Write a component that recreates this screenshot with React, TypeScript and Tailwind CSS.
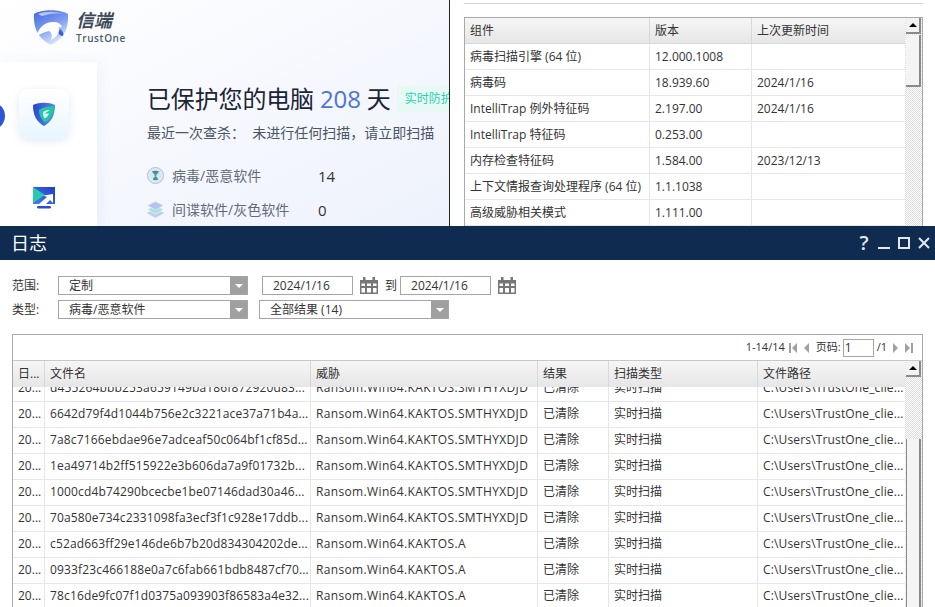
import React from "react";

const font = { fontFamily: '"Open Sans","Noto Sans CJK SC",sans-serif' };

const components = [
  ["病毒扫描引擎 (64 位)", "12.000.1008", ""],
  ["病毒码", "18.939.60", "2024/1/16"],
  ["IntelliTrap 例外特征码", "2.197.00", "2024/1/16"],
  ["IntelliTrap 特征码", "0.253.00", ""],
  ["内存检查特征码", "1.584.00", "2023/12/13"],
  ["上下文情报查询处理程序 (64 位)", "1.1.1038", ""],
  ["高级威胁相关模式", "1.111.00", ""],
];

const SM = "Ransom.Win64.KAKTOS.SMTHYXDJD";
const A = "Ransom.Win64.KAKTOS.A";
const logs = [
  ["d455264bbb253a659149ba186f872920d83...", SM],
  ["6642d79f4d1044b756e2c3221ace37a71b4a...", SM],
  ["7a8c7166ebdae96e7adceaf50c064bf1cf85d...", SM],
  ["1ea49714b2ff515922e3b606da7a9f01732b...", SM],
  ["1000cd4b74290bcecbe1be07146dad30a46...", SM],
  ["70a580e734c2331098fa3ecf3f1c928e17ddb...", SM],
  ["c52ad663ff29e146de6b7b20d834304202de...", A],
  ["0933f23c466188e0a7c6fab661bdb8487cf70...", A],
  ["78c16de9fc07f1d0375a093903f86583a4e32...", A],
];

function Logo() {
  return (
    <svg width="36" height="36" viewBox="0 0 36 36">
      <defs>
        <linearGradient id="lg1" x1="0" y1="0" x2="0.5" y2="1">
          <stop offset="0" stopColor="#3f66de" />
          <stop offset="0.55" stopColor="#7f9cf0" />
          <stop offset="1" stopColor="#dbe4fb" />
        </linearGradient>
        <linearGradient id="lg2" x1="0" y1="0" x2="1" y2="0">
          <stop offset="0" stopColor="#c4d2f8" />
          <stop offset="1" stopColor="#8fa8f0" />
        </linearGradient>
      </defs>
      <path d="M1 4C9 -1 27 -1 35 4C36 19 30 29 18 35C6 29 0 19 1 4Z" fill="url(#lg1)" />
      <path d="M5 4C13 1 23 1 31 4C27 3 18 3 9 6Z" fill="url(#lg2)" />
      <path d="M4 26C5 17 13 11 22 12C25 12.5 28 14 29 17L25.5 17.5C27 22 24 27 18 30C19.5 26 19 23 16 21C11 22 7 24 4 26Z" fill="#fff" />
      <path d="M27 19C30 21 31 24 30 26C28 26 26 25 25.5 23Z" fill="#3b5fd8" />
    </svg>
  );
}

function ShieldIcon() {
  return (
    <svg width="22" height="24" viewBox="0 0 22 24">
      <defs>
        <linearGradient id="sh1" x1="0" y1="0" x2="1" y2="0.2">
          <stop offset="0" stopColor="#2444c8" />
          <stop offset="1" stopColor="#5b86ee" />
        </linearGradient>
      </defs>
      <path d="M0 3C6 0 16 0 22 3C22 14 18 20 11 24C4 20 0 14 0 3Z" fill="url(#sh1)" />
      <path d="M6 8C10 5 16 4 21 4C21 12 17 18 12 20.5C8.5 18 6 13 6 8Z" fill="#22c7a3" />
      <path d="M10 10C12 8.5 14.5 8 17 8L11.5 11.5L16 11.5C15 14 13.5 15.5 12 16.5C10.5 15 9.5 12.5 10 10Z" fill="#e6fbf6" />
    </svg>
  );
}

function ScreenIcon() {
  return (
    <svg width="22" height="22" viewBox="0 0 22 22">
      <defs>
        <linearGradient id="sc1" x1="0" y1="1" x2="1" y2="0">
          <stop offset="0" stopColor="#4a7cf0" />
          <stop offset="1" stopColor="#1f3fc4" />
        </linearGradient>
      </defs>
      <rect x="0" y="0" width="22" height="17" fill="url(#sc1)" />
      <path d="M0 0L12 8L0 16Z" fill="#27c9b0" />
      <path d="M6 17L14 10L10.5 8.5L20 7L20 16L17 13L13 17Z" fill="#fff" />
      <rect x="4" y="19" width="14" height="2.5" rx="1.2" fill="#2a4fd6" />
    </svg>
  );
}

function Biohazard() {
  return (
    <svg width="17" height="17" viewBox="0 0 17 17">
      <circle cx="8.5" cy="8.5" r="8" fill="#e3e8f8" stroke="#aebce6" />
      <circle cx="8.5" cy="8.5" r="5.6" fill="#cdeee8" />
      <path d="M4.8 4.6C6.5 3.4 10.5 3.4 12.2 4.6L9.5 7.8L8.5 7.4L7.5 7.8Z" fill="#4f8d9e" />
      <path d="M5.6 12.5L7.7 9.4L9.3 9.4L11.4 12.5C10 13.4 7 13.4 5.6 12.5Z" fill="#4f8d9e" />
      <circle cx="8.5" cy="8.5" r="1" fill="#4f8d9e" />
    </svg>
  );
}

function Layers() {
  return (
    <svg width="17" height="17" viewBox="0 0 17 17">
      <path d="M8.5 8.5L16.5 12L8.5 16.5L0.5 12Z" fill="#c3cff0" stroke="#aebce6" strokeWidth="0.5" />
      <path d="M8.5 5L16.5 8.5L8.5 13L0.5 8.5Z" fill="#a5e2d9" stroke="#e8eefb" strokeWidth="0.7" />
      <path d="M8.5 0.5L16.5 4.5L8.5 9L0.5 4.5Z" fill="#b4c4ef" stroke="#e8eefb" strokeWidth="0.7" />
    </svg>
  );
}

function Calendar() {
  return (
    <svg width="18" height="17" viewBox="0 0 18 17">
      <path d="M0 3H3V0H5.5V3H12.5V0H15V3H18V17H0Z" fill="#777" />
      <path d="M1.5 6.5H5V9H1.5ZM7 6.5H11V9H7ZM13 6.5H16.5V9H13ZM1.5 11H5V15.5H1.5ZM7 11H11V15.5H7ZM13 11H16.5V15.5H13Z" fill="#fff" />
    </svg>
  );
}

function Select({ w, label }: { w: string; label: string }) {
  return (
    <div className={`${w} h-[19px] border border-[#a5a5a5] flex items-center justify-between bg-white`}>
      <span className="pl-[10px] text-[12px] leading-none text-[#333]">{label}</span>
      <span className="w-[17px] h-full bg-[#a0a0a0] flex items-center justify-center">
        <span className="border-x-[4px] border-x-transparent border-t-[4px] border-t-white" />
      </span>
    </div>
  );
}

function DateBox({ v }: { v: string }) {
  return (
    <div className="w-[91px] h-[19px] border border-[#a5a5a5] flex items-center pl-[10px] text-[12px] text-[#333]">{v}</div>
  );
}

function ScrollUp() {
  return (
    <div className="h-[16px] mx-px bg-[#f2f2f2] border-b-2 border-r-2 border-[#8a8a8a] flex items-center justify-center">
      <span className="border-x-[4px] border-x-transparent border-b-[4px] border-b-black" />
    </div>
  );
}

function PagerTri({ dir, bar, className }: { dir: "l" | "r"; bar?: boolean; className?: string }) {
  return (
    <span className={`flex items-center gap-px ${className ?? ""}`}>
      {bar && dir === "l" && <span className="w-[2px] h-[10px] bg-[#a0a0a0]" />}
      <span
        className={
          dir === "l"
            ? "border-y-[5px] border-y-transparent border-r-[5px] border-r-[#a0a0a0]"
            : "border-y-[5px] border-y-transparent border-l-[5px] border-l-[#a0a0a0]"
        }
      />
      {bar && dir === "r" && <span className="w-[2px] h-[10px] bg-[#a0a0a0]" />}
    </span>
  );
}

const track = "bg-[repeating-conic-gradient(#dcdcdc_0_25%,#ffffff_0_50%)] bg-[length:2px_2px]";

export default function App() {
  return (
    <div className="w-[935px] h-[607px] overflow-hidden bg-white flex flex-col text-[#333]" style={font}>
      <div className="h-[226px] flex shrink-0 overflow-hidden">
        {/* product window */}
        <div className="w-[449px] h-full flex flex-col bg-gradient-to-br from-[#ffffff] via-[#f6f8fe] to-[#eef2fc] border-r border-[#222] box-content">
          <div className="h-[62px] shrink-0 flex items-start pl-[33px] pt-[10px] gap-[7px]">
            <Logo />
            <div className="flex flex-col">
              <span className="text-[18px] leading-[20px] font-bold italic text-[#3d4858]">信端</span>
              <span className="text-[10px] leading-[14px] mt-[1px] font-semibold tracking-[0.6px] text-[#4c5a6e]">TrustOne</span>
            </div>
          </div>
          <div className="flex-1 flex min-h-0">
            <div className="w-[97px] bg-white shadow-[4px_0_12px_rgba(120,140,200,0.08)] flex flex-col pl-[19px] relative">
              <span className="absolute left-[-23px] top-[40px] w-[28px] h-[28px] rounded-full bg-[#2f55d4]" />
              <div className="mt-[27px] w-[50px] h-[50px] rounded-[10px] bg-gradient-to-b from-white to-[#e8f6fe] shadow-[0_2px_8px_rgba(120,140,200,0.2)] flex items-center justify-center">
                <ShieldIcon />
              </div>
              <div className="mt-[48px] ml-[14px]">
                <ScreenIcon />
              </div>
            </div>
            <div className="flex-1 pl-[50px] pt-[21px] overflow-hidden">
              <div className="flex items-center whitespace-nowrap">
                <span className="text-[24px] tracking-[-0.15px] leading-[32px] text-[#1b2536]">已保护您的电脑 <span className="text-[#4c73d9]">208</span> 天</span>
                <span className="ml-[6px] h-[26px] px-[8px] bg-[#e7f9f5] rounded-[3px] text-[12px] leading-[26px] text-[#2fcfb0] shrink-0">实时防护</span>
              </div>
              <div className="mt-[9px] text-[14px] leading-[18px] text-[#4b5563] whitespace-nowrap">
                最近一次查杀：&nbsp;&nbsp;未进行任何扫描，请立即扫描
              </div>
              <div className="mt-[24px] flex items-center h-[18px] text-[14px] text-[#626b7a]">
                <Biohazard />
                <span className="ml-[8px] w-[146px] whitespace-nowrap">病毒/恶意软件</span>
                <span className="text-[15px] leading-[20px] mt-[1px] text-[#333]">14</span>
              </div>
              <div className="mt-[16px] flex items-center h-[18px] text-[14px] text-[#626b7a]">
                <Layers />
                <span className="ml-[8px] w-[146px] whitespace-nowrap">间谍软件/灰色软件</span>
                <span className="text-[15px] leading-[20px] mt-[1px] text-[#333]">0</span>
              </div>
            </div>
          </div>
        </div>

        {/* components window */}
        <div className="flex-1 pl-[14px] pr-[12px] bg-white">
          <div className="h-[4px] border-b border-[#d4d4d4]" />
          <div className="mt-[13px] border border-b-0 border-[#a9a9a9] h-[230px] flex">
            <div className="flex-1 min-w-0">
              <div className="h-[26px] flex bg-gradient-to-b from-[#f6f6f6] to-[#e6e6e6] text-[12px] border-b border-[#d8d8d8]">
                <div className="w-[185px] pl-[5px] border-r border-[#d8d8d8] leading-[25px]">组件</div>
                <div className="w-[102px] pl-[5px] border-r border-[#d8d8d8] leading-[25px]">版本</div>
                <div className="flex-1 pl-[5px] leading-[25px]">上次更新时间</div>
              </div>
              {components.map((r) => (
                <div key={r[0]} className="h-[26px] flex text-[12px] border-b border-[#e6e6e6]">
                  <div className="w-[185px] pl-[5px] border-r border-[#e6e6e6] leading-[25px] whitespace-nowrap">{r[0]}</div>
                  <div className="w-[102px] pl-[5px] border-r border-[#e6e6e6] leading-[25px]">{r[1]}</div>
                  <div className="flex-1 pl-[5px] leading-[25px]">{r[2]}</div>
                </div>
              ))}
            </div>
            <div className={`w-[17px] shrink-0 ${track}`}>
              <ScrollUp />
              <div className="h-[52px] mt-[1px] mx-px bg-[#f4f4f4] border-b-2 border-r-2 border-[#8a8a8a]" />
            </div>
          </div>
        </div>
      </div>

      {/* log dialog */}
      <div className="h-[34px] shrink-0 bg-[#0f2b4f] flex items-center justify-between pl-[11px] pr-[4px] text-white">
        <span className="text-[18px] leading-none">日志</span>
        <div className="flex items-center text-[#e3e8f0]">
          <span className="text-[20px] font-semibold leading-none w-[12px] text-center">?</span>
          <svg className="ml-[7px]" width="14" height="14" viewBox="0 0 14 14"><rect x="1" y="11" width="12" height="2" fill="currentColor" /></svg>
          <svg className="ml-[6px]" width="14" height="14" viewBox="0 0 14 14"><rect x="2" y="2" width="10" height="10" fill="none" stroke="currentColor" strokeWidth="2" /></svg>
          <svg className="ml-[6px]" width="14" height="14" viewBox="0 0 14 14"><path d="M2 2L12 12M12 2L2 12" stroke="currentColor" strokeWidth="2" /></svg>
        </div>
      </div>

      <div className="flex-1 min-h-0 flex flex-col px-[12px]">
        <div className="pt-[16px] flex flex-col gap-[5px] text-[12px] h-[74px] shrink-0">
          <div className="flex items-center h-[19px]">
            <span className="w-[46px]">范围:</span>
            <Select w="w-[190px]" label="定制" />
            <span className="w-[14px]" />
            <DateBox v="2024/1/16" />
            <span className="ml-[7px]"><Calendar /></span>
            <span className="ml-[7px] mr-[3px]">到</span>
            <DateBox v="2024/1/16" />
            <span className="ml-[7px]"><Calendar /></span>
          </div>
          <div className="flex items-center h-[19px]">
            <span className="w-[46px]">类型:</span>
            <Select w="w-[190px]" label="病毒/恶意软件" />
            <span className="w-[11px]" />
            <Select w="w-[190px]" label="全部结果 (14)" />
          </div>
        </div>

        <div className="flex-1 min-h-0 border border-b-0 border-[#a9a9a9] flex flex-col text-[12px]">
          <div className="h-[26px] shrink-0 flex items-center justify-end pr-[9px] border-b border-[#c8c8c8] whitespace-nowrap text-[11px]">
            <span>1-14/14</span>
            <PagerTri dir="l" bar className="ml-[4px]" />
            <PagerTri dir="l" className="ml-[7px]" />
            <span className="ml-[7px]">页码:</span>
            <span className="ml-[2px] w-[31px] h-[18px] border border-[#a5a5a5] pl-px leading-[16px] text-[12px]">1</span>
            <span className="ml-[3px]">/1</span>
            <PagerTri dir="r" className="ml-[6px]" />
            <PagerTri dir="r" bar className="ml-[7px]" />
          </div>
          <div className="flex-1 min-h-0 flex">
            <div className="flex-1 min-w-0 flex flex-col overflow-hidden">
              <div className="h-[26px] shrink-0 flex bg-gradient-to-b from-[#f6f6f6] to-[#e6e6e6] relative z-10 leading-[26px]">
                <div className="w-[32px] pl-[5px] border-r border-[#d8d8d8]">日...</div>
                <div className="w-[266px] pl-[5px] border-r border-[#d8d8d8]">文件名</div>
                <div className="w-[227px] pl-[5px] border-r border-[#d8d8d8]">威胁</div>
                <div className="w-[71px] pl-[5px] border-r border-[#d8d8d8]">结果</div>
                <div className="w-[149px] pl-[5px] border-r border-[#d8d8d8]">扫描类型</div>
                <div className="flex-1 pl-[5px]">文件路径</div>
              </div>
              <div className="-mt-[11px]">
                {logs.map((r) => (
                  <div key={r[0]} className="h-[26px] flex border-b border-[#e6e6e6] leading-[23px] whitespace-nowrap">
                    <div className="w-[32px] pl-[5px] border-r border-[#e6e6e6]">20...</div>
                    <div className="w-[266px] pl-[5px] border-r border-[#e6e6e6] tracking-[0.15px] overflow-hidden">{r[0]}</div>
                    <div className="w-[227px] pl-[5px] border-r border-[#e6e6e6] tracking-[0.35px]">{r[1]}</div>
                    <div className="w-[71px] pl-[5px] border-r border-[#e6e6e6]">已清除</div>
                    <div className="w-[149px] pl-[5px] border-r border-[#e6e6e6]">实时扫描</div>
                    <div className="flex-1 pl-[5px] tracking-[0.15px]">C:\Users\TrustOne_clie...</div>
                  </div>
                ))}
              </div>
            </div>
            <div className={`w-[17px] shrink-0 ${track}`}>
              <ScrollUp />
              <div className="h-[200px] mt-[62px] mx-px bg-[#f4f4f4] border-r-2 border-l border-[#8a8a8a]" />
            </div>
          </div>
        </div>
      </div>
    </div>
  );
}
